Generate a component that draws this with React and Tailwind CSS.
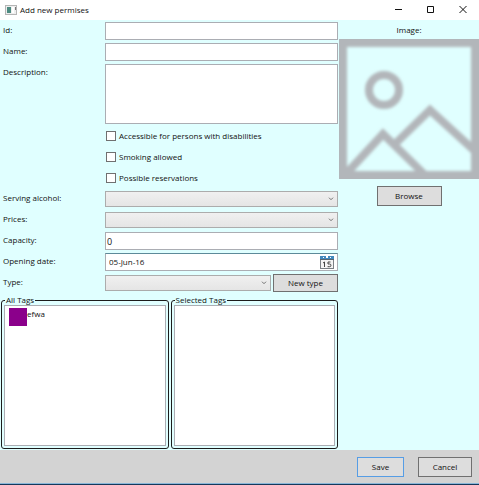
import { useState } from "react";

const fieldBox = "w-full rounded-none border border-[#abadb3] bg-white text-[9px] outline-none";
const buttonBox = "border border-[#707070] bg-[#dddddd] text-center";

function Row({ label, id, children, tall }) {
  return (
    <div className="flex gap-[2px]">
      <label htmlFor={id} className="h-[18px] w-[100px] shrink-0 leading-4">
        {label}
      </label>
      <div className={tall ? "h-[60px] min-w-0 flex-1" : "flex h-[18px] min-w-0 flex-1 items-center gap-[2px]"}>
        {children}
      </div>
    </div>
  );
}

function Check({ label }) {
  return (
    <div className="flex h-[18px] items-center pl-[106px]">
      <label className="flex items-center gap-[3px]">
        <input type="checkbox" className="size-[10px] appearance-none border border-[#707070] bg-white checked:bg-[#707070]" />
        {label}
      </label>
    </div>
  );
}

function Drop({ id }) {
  return (
    <div className="relative h-4 min-w-0 flex-1">
      <select
        id={id}
        className="block h-4 w-full appearance-none rounded-none border border-[#acacac] bg-linear-to-b from-[#f0f0f0] to-[#e5e5e5] px-1 outline-none"
      />
      <svg viewBox="0 0 6 4" className="pointer-events-none absolute top-[6px] right-[4px] h-1 w-[6px]" fill="none" stroke="#707070">
        <path d="M1 .7 3 2.7 5 .7" />
      </svg>
    </div>
  );
}

function TagGroup({ title, children }) {
  return (
    <fieldset className="flex min-w-0 flex-1 flex-col rounded-[3px] border border-[#1c1c1c] px-[2px] pb-[2px]">
      <legend className="ml-px px-px leading-[10px]">{title}</legend>
      <ul className="h-[141px] border border-[#abadb3] bg-white px-[4px] py-[2px]">{children}</ul>
    </fieldset>
  );
}

function CalendarIcon() {
  return (
    <svg viewBox="0 0 14 13" className="h-[13px] w-[14px]">
      <rect x=".5" y=".5" width="13" height="12" fill="#f4f4f4" stroke="#7b8085" />
      <rect x="0" y="0" width="14" height="3" fill="#4288bd" />
      <rect x="0" y="3" width="14" height="1" fill="#59656f" />
      <rect x="3" y="1" width="1" height="1" fill="#fff" />
      <rect x="6" y="0" width="2" height="2" fill="#fff" />
      <rect x="10" y="1" width="1" height="1" fill="#fff" />
      <path d="M3 7l1.5-1v5M10.5 6H8v2h1.6a1.3 1.3 0 0 1 0 2.7H7.6" fill="none" stroke="#444" />
    </svg>
  );
}

function ImagePlaceholder() {
  return (
    <svg viewBox="0 0 140 140" className="aspect-square w-full" role="img" aria-label="Image">
      <defs>
        <filter id="soft" x="0" y="0" width="1" height="1">
          <feGaussianBlur stdDeviation="1.5" />
        </filter>
      </defs>
      <g fill="none" stroke="#b2b6ba" strokeWidth="8" filter="url(#soft)">
        <path d="M-6 -6H146V146H-6Z" strokeWidth="28" />
        <circle cx="45" cy="51" r="15" />
        <path d="M6 136 44 95 88 138M57 104 91 71 138 114" />
      </g>
    </svg>
  );
}

export default function App() {
  const [capacity, setCapacity] = useState("0");
  const [date, setDate] = useState("05-Jun-16");

  return (
    <div className="flex min-h-screen flex-col bg-[#e0ffff] font-['Open_Sans','Noto_Sans',sans-serif] text-[8px] text-[#111]">
      <header className="flex h-5 items-center bg-white pl-[5px]">
        <svg viewBox="0 0 12 10" className="mr-[3px] h-[10px] w-3">
          <rect x=".5" y=".5" width="11" height="9" fill="#eee" stroke="#b5b5b5" />
          <rect x="2" y="2" width="4" height="6" fill="#4c8a80" />
          <rect x="7" y="2" width="2" height="6" fill="#fff" />
          <rect x="10" y="2" width="1" height="3" fill="#777" />
        </svg>
        <h1 className="flex-1">Add new permises</h1>
        <button aria-label="Minimize" className="flex h-5 w-8 items-center justify-center">
          <svg viewBox="0 0 8 8" className="size-2" stroke="#111"><path d="M0 3.5H7" /></svg>
        </button>
        <button aria-label="Maximize" className="flex h-5 w-8 items-center justify-center">
          <svg viewBox="0 0 8 8" className="size-2" fill="none" stroke="#111"><path d="M.5 .5H6.5V6.5H.5Z" /></svg>
        </button>
        <button aria-label="Close" className="flex h-5 w-8 items-center justify-center">
          <svg viewBox="0 0 8 8" className="size-2" stroke="#111"><path d="M.5 0 7.5 7M7.5 0 .5 7" /></svg>
        </button>
      </header>

      <main className="flex flex-1">
        <form className="flex min-w-0 flex-1 flex-col gap-[3px] pt-[2px]">
          <div className="flex flex-col gap-[3px] pr-px pl-[3px]">
            <Row label="Id:" id="pid"><input id="pid" className={`${fieldBox} h-[18px] px-[2px]`} /></Row>
            <Row label="Name:" id="pname"><input id="pname" className={`${fieldBox} h-[18px] px-[2px]`} /></Row>
            <Row label="Description:" id="desc" tall>
              <textarea id="desc" className={`${fieldBox} block h-[60px] resize-none px-[2px]`} />
            </Row>
          </div>
          <Check label="Accessible for persons with disabilities" />
          <Check label="Smoking allowed" />
          <Check label="Possible reservations" />
          <div className="flex flex-col gap-[3px] pr-px pl-[3px]">
            <Row label="Serving alcohol:" id="alcohol"><Drop id="alcohol" /></Row>
            <Row label="Prices:" id="prices"><Drop id="prices" /></Row>
            <Row label="Capacity:" id="capacity">
              <input id="capacity" value={capacity} onChange={(e) => setCapacity(e.target.value)} className={`${fieldBox} h-[18px] px-px`} />
            </Row>
            <Row label="Opening date:" id="date">
              <div className="flex h-[18px] w-full items-center border border-[#abadb3] border-t-[#5d8a99] bg-white pr-[3px]">
                <input id="date" value={date} onChange={(e) => setDate(e.target.value)} className="min-w-0 flex-1 px-[3px] outline-none" />
                <button type="button" aria-label="Open calendar"><CalendarIcon /></button>
              </div>
            </Row>
            <Row label="Type:" id="type">
              <Drop id="type" />
              <button type="button" className={`${buttonBox} h-[18px] w-[65px]`}>New type</button>
            </Row>
          </div>
          <div className="flex gap-[2px] pr-px pb-px pl-px">
            <TagGroup title="All Tags">
              <li className="flex">
                <span className="size-[18px] bg-[#8b008b]" />
                <span className="leading-3">efwa</span>
              </li>
            </TagGroup>
            <TagGroup title="Selected Tags" />
          </div>
        </form>

        <aside className="flex w-[140px] shrink-0 flex-col items-center">
          <h2 className="h-[19px] leading-5">Image:</h2>
          <ImagePlaceholder />
          <button className={`${buttonBox} mt-[7px] h-5 w-[65px]`}>Browse</button>
        </aside>
      </main>

      <footer className="flex h-[35px] items-start justify-end gap-[14px] border-b border-[#15395b] bg-[#d3d3d3] pt-[7px] pr-[7px] shadow-[inset_0_-1px_0_#8ab6d8]">
        <button className="h-5 w-[47px] border border-[#569de5] bg-[#dddddd]">Save</button>
        <button className={`${buttonBox} h-5 w-[54px]`}>Cancel</button>
      </footer>
    </div>
  );
}
